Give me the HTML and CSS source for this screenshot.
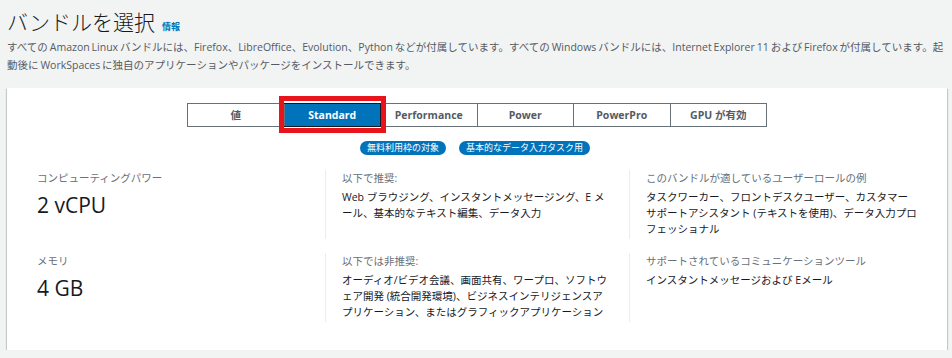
FILE: index.html
```html
<!DOCTYPE html>
<html lang="ja">
<head>
<meta charset="utf-8">
<title>バンドルを選択</title>
<link rel="stylesheet" href="styles.css">
</head>
<body>
<div class="page">
  <h1 class="title">バンドルを選択<a class="info" href="#">情報</a></h1>
  <p class="desc">すべての Amazon Linux バンドルには、Firefox、LibreOffice、Evolution、Python などが付属しています。すべての Windows バンドルには、Internet Explorer 11 および Firefox が付属しています。起動後に WorkSpaces に独自のアプリケーションやパッケージをインストールできます。</p>
  <div class="card">
    <div class="seg">
      <div class="seg-item">値</div>
      <div class="seg-item selected">Standard</div>
      <div class="seg-item">Performance</div>
      <div class="seg-item">Power</div>
      <div class="seg-item">PowerPro</div>
      <div class="seg-item">GPU が有効</div>
    </div>
    <div class="badges">
      <span class="badge">無料利用枠の対象</span>
      <span class="badge">基本的なデータ入力タスク用</span>
    </div>
    <div class="grid">
      <div class="cell first">
        <div class="label">コンピューティングパワー</div>
        <div class="value">2 vCPU</div>
      </div>
      <div class="cell">
        <div class="label">以下で推奨:</div>
        <div class="text">Web ブラウジング、インスタントメッセージング、E メール、基本的なテキスト編集、データ入力</div>
      </div>
      <div class="cell">
        <div class="label">このバンドルが適しているユーザーロールの例</div>
        <div class="text">タスクワーカー、フロントデスクユーザー、カスタマーサポートアシスタント (テキストを使用)、データ入力プロフェッショナル</div>
      </div>
      <div class="cell first">
        <div class="label">メモリ</div>
        <div class="value">4 GB</div>
      </div>
      <div class="cell">
        <div class="label">以下では非推奨:</div>
        <div class="text">オーディオ/ビデオ会議、画面共有、ワープロ、ソフトウェア開発 (統合開発環境)、ビジネスインテリジェンスアプリケーション、またはグラフィックアプリケーション</div>
      </div>
      <div class="cell">
        <div class="label">サポートされているコミュニケーションツール</div>
        <div class="text">インスタントメッセージおよび Eメール</div>
      </div>
    </div>
  </div>
</div>
</body>
</html>
```

FILE: styles.css
```css
html, body {
  margin: 0;
  padding: 0;
  background: #f2f3f3;
}
body {
  font-family: "Open Sans", "Noto Sans CJK JP", sans-serif;
  color: #16191f;
  font-size: 10.5px;
  line-break: normal;
}
.page {
  padding: 8px 5px 0 7px;
}
.title {
  margin: 0;
  height: 28px;
  font-size: 21px;
  line-height: 28px;
  font-weight: 300;
  color: #16191f;
}
.info {
  font-size: 9px;
  line-height: 1;
  font-weight: 700;
  color: #0073bb;
  text-decoration: none;
  margin-left: 7px;
}
.desc {
  margin: 2px 0 0;
  height: 36px;
  line-height: 18px;
  color: #545b64;
  word-spacing: -0.8px;
}
.card {
  margin-top: 14px;
  background: #fff;
  box-shadow: 0 1px 1px 0 rgba(0, 28, 36, 0.3), 1px 1px 1px 0 rgba(0, 28, 36, 0.15), -1px 1px 1px 0 rgba(0, 28, 36, 0.15);
  padding: 15px 13.8px 0 30px;
  height: 262px;
  box-sizing: border-box;
}
.seg {
  display: flex;
  width: 580px;
  margin: 0 0 0 150px;
  border: 1px solid #687078;
  box-sizing: border-box;
  height: 24px;
}
.seg-item {
  flex: 1;
  text-align: center;
  font-weight: 700;
  color: #545b64;
  line-height: 22px;
  border-left: 1px solid #687078;
}
.seg-item:first-child {
  border-left: none;
}
.seg-item.selected {
  position: relative;
  background: #0073bb;
  color: #fff;
  outline: 1px solid #16191f;
}
.seg-item.selected::after {
  content: "";
  position: absolute;
  left: -6px;
  right: -6px;
  top: -8px;
  bottom: -7px;
  border: 5px solid #e8141c;
}
.badges {
  display: flex;
  justify-content: center;
  gap: 13px;
  height: 14px;
  margin: 14px 0 0 -20px;
}
.badge {
  background: #0073bb;
  color: #fff;
  font-size: 9px;
  line-height: 14px;
  height: 14px;
  padding: 0 7px;
  border-radius: 7px;
}
.grid {
  display: grid;
  grid-template-columns: 288px 304px 1fr;
  row-gap: 14px;
  margin-top: 15px;
}
.cell {
  border-left: 1px solid #eaeded;
  padding: 0 16px 2px;
}
.cell.first {
  border-left: none;
  padding-left: 0;
}
.label {
  color: #687078;
  line-height: 16px;
}
.value {
  font-size: 21px;
  line-height: 32px;
  margin-top: 3px;
}
.text {
  margin-top: 3px;
  line-height: 16px;
}
```
